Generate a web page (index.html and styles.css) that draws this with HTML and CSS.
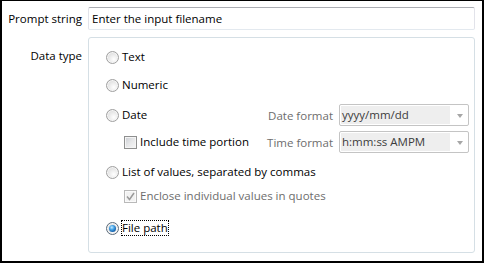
FILE: index.html
```html
<!DOCTYPE html>
<html>
<head>
<meta charset="utf-8">
<link rel="stylesheet" href="styles.css">
</head>
<body>
<div class="dialog">
  <div class="field-label prompt-label">Prompt string</div>
  <div class="textbox">Enter the input filename</div>

  <div class="field-label type-label">Data type</div>
  <div class="group">
    <div class="opt r1"><span class="radio"></span><span class="cap">Text</span></div>
    <div class="opt r2"><span class="radio"></span><span class="cap">Numeric</span></div>
    <div class="opt r3">
      <span class="radio"></span><span class="cap">Date</span>
      <span class="fmt-label">Date format</span>
      <div class="combo"><span class="combo-text">yyyy/mm/dd</span><span class="arrow"></span></div>
    </div>
    <div class="opt r4 sub">
      <span class="check"></span><span class="cap">Include time portion</span>
      <span class="fmt-label">Time format</span>
      <div class="combo"><span class="combo-text">h:mm:ss AMPM</span><span class="arrow"></span></div>
    </div>
    <div class="opt r5"><span class="radio"></span><span class="cap">List of values, separated by commas</span></div>
    <div class="opt r6 sub disabled">
      <span class="check checked-disabled"><svg width="9" height="9" viewBox="0 0 9 9"><path d="M1 4.5 L3.5 7.5 L8 1" fill="none" stroke="#9a9a9a" stroke-width="1.5"/></svg></span><span class="cap">Enclose individual values in quotes</span>
    </div>
    <div class="opt r7"><span class="radio on"></span><span class="cap focus">File path</span></div>
  </div>
</div>
</body>
</html>
```

FILE: styles.css
```css
html, body {
  margin: 0;
  padding: 0;
  background: #fff;
}

.dialog {
  box-sizing: border-box;
  width: 484px;
  height: 263px;
  border-style: solid;
  border-color: #000;
  border-width: 1px 2px 2px 2px;
  padding: 6px 7px 8px 0;
  display: grid;
  grid-template-columns: 80px 387px;
  grid-template-rows: 23px 216px;
  column-gap: 6px;
  row-gap: 7px;
  font-family: "Open Sans", "Noto Sans", sans-serif;
  font-size: 11.5px;
  color: #000;
}

.field-label {
  text-align: right;
  line-height: 16px;
}

.prompt-label {
  align-self: center;
}

.type-label {
  align-self: start;
  margin-top: 11px;
}

.textbox {
  box-sizing: border-box;
  height: 23px;
  border: 1px solid #e2e3ea;
  border-top-color: #abadb3;
  border-bottom-color: #e3e9ef;
  border-radius: 2px;
  padding: 0 3px;
  line-height: 21px;
  white-space: nowrap;
}

.group {
  box-sizing: border-box;
  border: 1px solid #d5dfe5;
  border-radius: 3px;
  padding: 8px 5px 0 17px;
  display: flex;
  flex-direction: column;
}

.opt {
  height: 22px;
  display: flex;
  align-items: center;
}

.r2 { margin-top: 6px; }
.r3 { margin-top: 8px; }
.r4 { margin-top: 5px; }
.r5 { margin-top: 8px; }
.r6 { margin-top: 2px; }
.r7 { margin-top: 10px; }

.sub {
  padding-left: 18px;
}

.cap {
  margin-left: 3px;
  white-space: nowrap;
  line-height: 14px;
}

.disabled .cap {
  color: #6d6d6d;
}

.radio {
  box-sizing: border-box;
  flex: none;
  position: relative;
  width: 13px;
  height: 13px;
  border-radius: 50%;
  border: 1px solid #a0a0a0;
  background: radial-gradient(circle at 62% 66%, #ffffff 0, #ededed 40%, #d2d2d2 100%);
  box-shadow: inset 0 0 0 1px #f5f5f5;
}

.radio.on {
  border-color: #5b6b7b;
}

.radio.on::after {
  content: "";
  position: absolute;
  left: 2px;
  top: 2px;
  width: 7px;
  height: 7px;
  border-radius: 50%;
  background: radial-gradient(circle at 40% 35%, #c8ecff 0, #49a6e8 35%, #1663ad 70%, #0c3a6e 100%);
}

.check {
  box-sizing: border-box;
  flex: none;
  width: 13px;
  height: 13px;
  border: 1px solid #8e8f8f;
  background: linear-gradient(135deg, #c9ccd1 0, #e6e7e9 50%, #f7f7f7 100%);
  box-shadow: inset 0 0 0 1px #f4f4f4;
  display: flex;
  align-items: center;
  justify-content: center;
}

.check.checked-disabled {
  border-color: #b9b9b9;
  background: #f2f2f2;
  box-shadow: inset 0 0 0 1px #fafafa;
}

.focus {
  outline: 1px dotted #000;
  outline-offset: 0;
}

.fmt-label {
  margin-left: auto;
  margin-right: 6px;
  color: #6d6d6d;
  white-space: nowrap;
}

.combo {
  box-sizing: border-box;
  flex: none;
  width: 130px;
  height: 22px;
  border: 1px solid #c4c4c4;
  border-radius: 2px;
  padding: 1px;
  display: flex;
  align-items: stretch;
}

.combo-text {
  width: 108px;
  background: #eeeeee;
  color: #3c3c3c;
  line-height: 18px;
  padding-left: 1px;
  white-space: nowrap;
}

.arrow {
  flex: 1;
  position: relative;
}

.arrow::after {
  content: "";
  position: absolute;
  left: 7px;
  top: 8px;
  border-left: 3.5px solid transparent;
  border-right: 3.5px solid transparent;
  border-top: 4px solid #a6a6a6;
}
```
